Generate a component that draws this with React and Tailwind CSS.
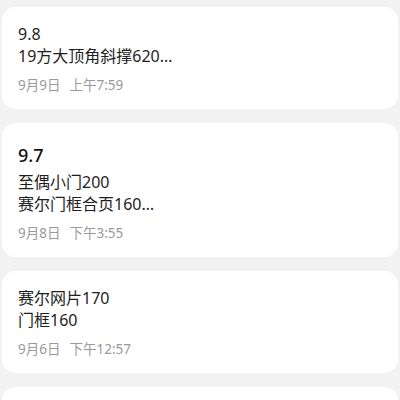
import React from "react";

const notes = [
  { title: null, lines: ["9.8", "19方大顶角斜撑620…"], date: "9月9日", time: "上午7:59" },
  { title: "9.7", lines: ["至偶小门200", "赛尔门框合页160…"], date: "9月8日", time: "下午3:55" },
  { title: null, lines: ["赛尔网片170", "门框160"], date: "9月6日", time: "下午12:57" },
  { title: null, lines: ["  "], date: "", time: "" },
];

const NoteCard = ({ note }) => (
  <div className="bg-white rounded-[14px] px-4 pt-4 pb-[15px]">
    {note.title && (
      <p className="text-[18px] leading-[32px] font-medium text-[#111]">{note.title}</p>
    )}
    {note.lines.map((l, i) => (
      <p key={i} className="text-[16px] leading-[22px] text-[#1e1e1e] whitespace-pre">
        {l}
      </p>
    ))}
    {note.date && (
      <p className="mt-[9px] text-[13.5px] leading-[18px] text-[#9a9a9a]">
        {note.date}
        <span className="ml-[9px]">{note.time}</span>
      </p>
    )}
  </div>
);

export default function App() {
  return (
    <div
      className="w-[400px] h-[400px] overflow-hidden bg-[#f2f2f2] px-[2px] pt-[7px] flex flex-col gap-[14px]"
      style={{ fontFamily: '"Noto Sans", "Noto Sans CJK SC", sans-serif' }}
    >
      {notes.map((n, i) => (
        <NoteCard key={i} note={n} />
      ))}
    </div>
  );
}
